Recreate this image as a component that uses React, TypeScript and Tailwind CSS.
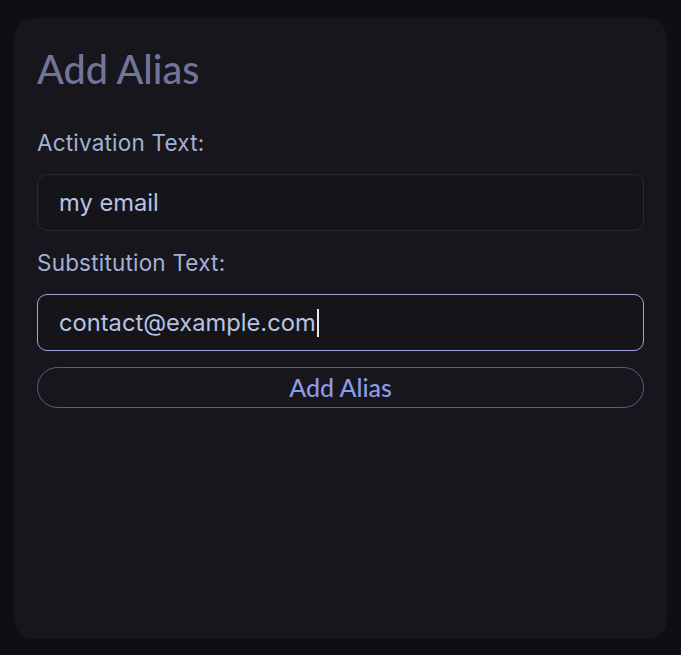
import React from "react";

export default function App() {
  return (
    <div className="min-h-[655px] w-full bg-[#0e0e13] pt-[18px] pl-[14px] pr-[14px] pb-[16px]" style={{ fontFamily: "Inter, 'Noto Sans', sans-serif" }}>
      <div className="h-[621px] w-[653px] rounded-[20px] bg-[#16161c] px-[23px] pt-[27px]">
        <h1 className="text-[39.5px] leading-[48px] font-medium text-[#71759b]" style={{ fontFamily: "Lato, sans-serif" }}>
          Add Alias
        </h1>
        <div className="mt-[36px] flex flex-col">
          <label className="text-[22.5px] leading-[28px] tracking-[0.2px] text-[#a3b0d4]">Activation Text:</label>
          <div className="mt-[17px] flex h-[57px] items-center rounded-[10px] border border-[#2a2a34] bg-[#141419] px-[21px] text-[23.7px] text-[#b8c2e2]">
            my email
          </div>
          <label className="mt-[18px] text-[22.5px] leading-[28px] tracking-[0.2px] text-[#a3b0d4]">Substitution Text:</label>
          <div className="mt-[17px] flex h-[57px] items-center rounded-[10px] border border-[#a0a6e4] bg-[#141419] px-[21px] text-[23.7px] text-[#b8c2e2]">
            contact@example.com
            <span className="ml-[1px] inline-block h-[28px] w-[2px] bg-[#e8e8f0]" />
          </div>
          <button className="mt-[16px] flex h-[41px] items-center justify-center rounded-full border-[1.5px] border-[#5c5f85] text-[25px] font-medium text-[#8e9ae6]" style={{ fontFamily: "Lato, sans-serif" }}>
            Add Alias
          </button>
        </div>
      </div>
    </div>
  );
}
